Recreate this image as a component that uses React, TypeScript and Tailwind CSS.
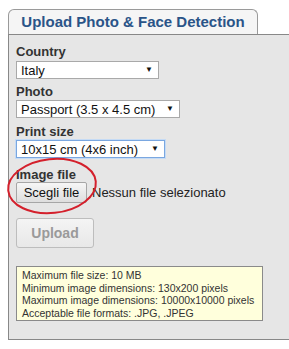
import clsx from "clsx";

const Select: React.FC<{ value: string; className: string; focused?: boolean }> = ({ value, className, focused }) => (
  <div
    className={clsx(
      "flex h-[18px] items-center justify-between bg-white pl-[4px] pr-[5px] text-[13px] leading-none text-[#111]",
      focused ? "border border-[#7aa7e0] shadow-[0_0_0_1px_#c5dbf5]" : "border border-[#a9a9a9]",
      className
    )}
  >
    <span>{value}</span>
    <span className="text-[8px]">▼</span>
  </div>
);

const Label: React.FC<{ text: string; className?: string }> = ({ text, className }) => (
  <div className={clsx("h-[15px] text-[13px] font-bold leading-[15px] text-[#333]", className)}>{text}</div>
);

export default function App() {
  return (
    <div className="relative h-[349px] w-[289px] overflow-hidden bg-white font-['Liberation_Sans',Arial,sans-serif]">
      <div className="pl-2 pt-[9px]">
        <div className="flex h-[25px] w-[250px] items-center justify-center rounded-t-[6px] border border-b-0 border-[#9a9a9a] bg-[#f5f5f5] text-[15px] font-bold text-[#2a5488]">
          Upload Photo &amp; Face Detection
        </div>
      </div>

      <div className="ml-2 h-[306px] border-y border-l border-[#888] bg-[#e6e6e6] pl-[7px] pt-[9px]">
        <Label text="Country" />
        <Select value="Italy" className="mt-[2px] w-[143px]" />

        <Label text="Photo" className="mt-[5px]" />
        <Select value="Passport (3.5 x 4.5 cm)" className="mt-[1px] w-[164px]" />

        <Label text="Print size" className="mt-[6px]" />
        <Select value="10x15 cm (4x6 inch)" className="mt-[1px] w-[149px]" focused />

        <Label text="Image file" className="mt-[9px]" />
        <div className="flex items-center gap-[5px]">
          <button className="h-[21px] w-[71px] rounded-[2px] border border-[#a6a6a6] bg-gradient-to-b from-[#f6f6f6] to-[#dedede] text-[13px] text-[#111]">
            Scegli file
          </button>
          <span className="text-[13px] text-[#222]">Nessun file selezionato</span>
        </div>

        <button className="mt-[15px] h-[30px] w-[78px] rounded-[3px] border border-[#bdbdbd] bg-gradient-to-b from-[#f4f4f4] to-[#e8e8e8] text-[14px] font-bold text-[#9a9a9a]">
          Upload
        </button>

        <div className="mt-[18px] w-[247px] whitespace-nowrap border border-[#8a8a8a] bg-[#ffffdc] px-[5px] pt-[2px] pb-[1px] text-[10.5px] leading-[12.5px] text-[#333]">
          <div>Maximum file size: 10 MB</div>
          <div>Minimum image dimensions: 130x200 pixels</div>
          <div>Maximum image dimensions: 10000x10000 pixels</div>
          <div>Acceptable file formats: .JPG, .JPEG</div>
        </div>
      </div>

      <svg className="pointer-events-none absolute left-0 top-0" width="289" height="349">
        <ellipse cx="52" cy="186" rx="44" ry="27" fill="none" stroke="#d4202c" strokeWidth="2" transform="rotate(-6 52 186)" />
      </svg>
    </div>
  );
}
